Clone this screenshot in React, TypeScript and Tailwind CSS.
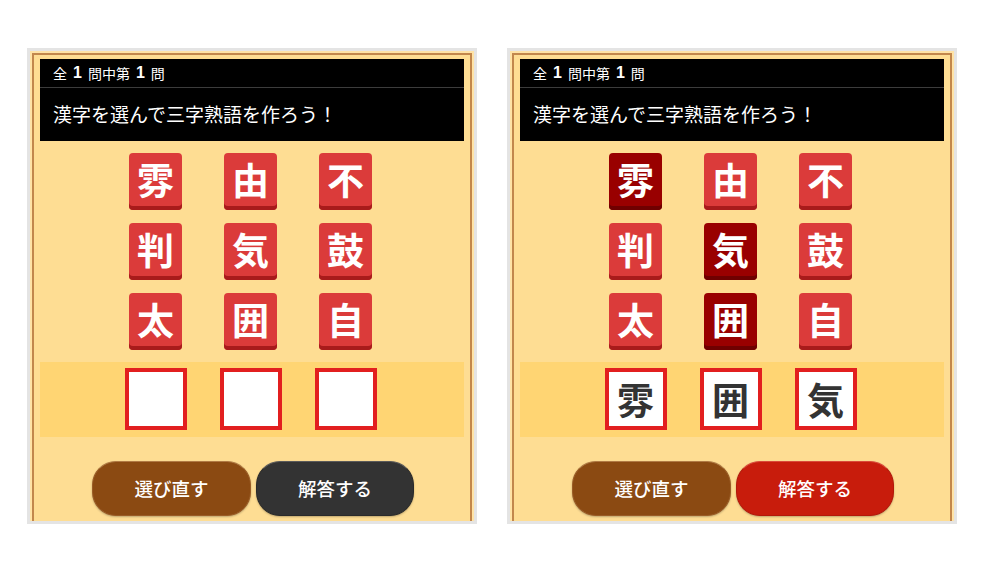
import React from 'react';

const TILES = ['雰', '由', '不', '判', '気', '鼓', '太', '囲', '自'];

const JP = { fontFamily: '"Noto Sans CJK JP", "Noto Sans", sans-serif' };

interface PanelProps {
    selected: number[];
    answer: string[];
    ready: boolean;
}

const Tile: React.FC<{ ch: string; on: boolean }> = ({ ch, on }) => (
    <div className="flex justify-center">
        <div
            className={`w-[53px] h-[57px] rounded-[4px] flex items-center justify-center pb-[4px] text-white font-bold text-[37px] leading-none ${
                on ? 'bg-[#990000] shadow-[inset_0_-4px_0_#6f0000]' : 'bg-[#db3b3a] shadow-[inset_0_-4px_0_#a81b1b]'
            }`}
        >
            {ch}
        </div>
    </div>
);

const Panel: React.FC<PanelProps> = ({ selected, answer, ready }) => (
    <div className="w-[450px] h-[476px] border-[3px] border-[#e4e4e4] overflow-hidden">
        <div className="h-[490px] border-2 border-[#ffe3a6] bg-[#ffe3a6]">
            <div className="h-full border-2 border-[#c2874c] bg-[#fedd93] px-[4px] pt-[4px]" style={JP}>
                {/* question header */}
                <div className="mx-[2px] bg-black text-white">
                    <div className="h-[29px] flex items-center pl-[13px] text-[14px] border-b border-[#3c3c3c]">
                        <span>全</span>
                        <span className="mx-[6px] text-[16px] font-bold" style={{ fontFamily: '"Liberation Sans", sans-serif' }}>1</span>
                        <span>問中第</span>
                        <span className="mx-[6px] text-[16px] font-bold" style={{ fontFamily: '"Liberation Sans", sans-serif' }}>1</span>
                        <span>問</span>
                    </div>
                    <div className="h-[53px] flex items-center pl-[13px] text-[19px]">漢字を選んで三字熟語を作ろう！</div>
                </div>

                {/* kanji tiles */}
                <div className="ml-[70px] w-[285px] mt-[12px] grid grid-cols-3 gap-y-[13px]">
                    {TILES.map((ch, i) => (
                        <Tile key={i} ch={ch} on={selected.includes(i)} />
                    ))}
                </div>

                {/* answer slots */}
                <div className="mx-[2px] mt-[12px] h-[75px] bg-[#ffd573] pt-[6px]">
                    <div className="ml-[68px] w-[285px] grid grid-cols-3">
                        {[0, 1, 2].map((i) => (
                            <div key={i} className="flex justify-center">
                                <div className="w-[62px] h-[62px] border-[4px] border-[#e21f1f] bg-white flex items-center justify-center text-[37px] font-bold leading-none text-[#333]">
                                    {answer[i] ?? ''}
                                </div>
                            </div>
                        ))}
                    </div>
                </div>

                {/* buttons */}
                <div className="mt-[24px] flex justify-center gap-[5px] pl-[2px]">
                    <button className="w-[159px] h-[55px] rounded-[24px] bg-[#8b4a12] border border-[#9a5c26] border-t-[#b07a44] shadow-[0_1px_2px_rgba(0,0,0,0.25)] text-white text-[18.5px] font-medium">
                        選び直す
                    </button>
                    <button
                        className={`w-[158px] h-[55px] rounded-[24px] border shadow-[0_1px_2px_rgba(0,0,0,0.25)] text-white text-[18.5px] font-medium ${
                            ready
                                ? 'bg-[#c81c0c] border-[#b3180a] border-t-[#d94a3a]'
                                : 'bg-[#333333] border-[#2a2a2a] border-t-[#5a5a5a]'
                        }`}
                    >
                        解答する
                    </button>
                </div>
            </div>
        </div>
    </div>
);

export default function App() {
    return (
        <div className="w-[984px] h-[573px] bg-white flex justify-center gap-[30px] pt-[48px]">
            <Panel selected={[]} answer={[]} ready={false} />
            <Panel selected={[0, 4, 7]} answer={['雰', '囲', '気']} ready={true} />
        </div>
    );
}
